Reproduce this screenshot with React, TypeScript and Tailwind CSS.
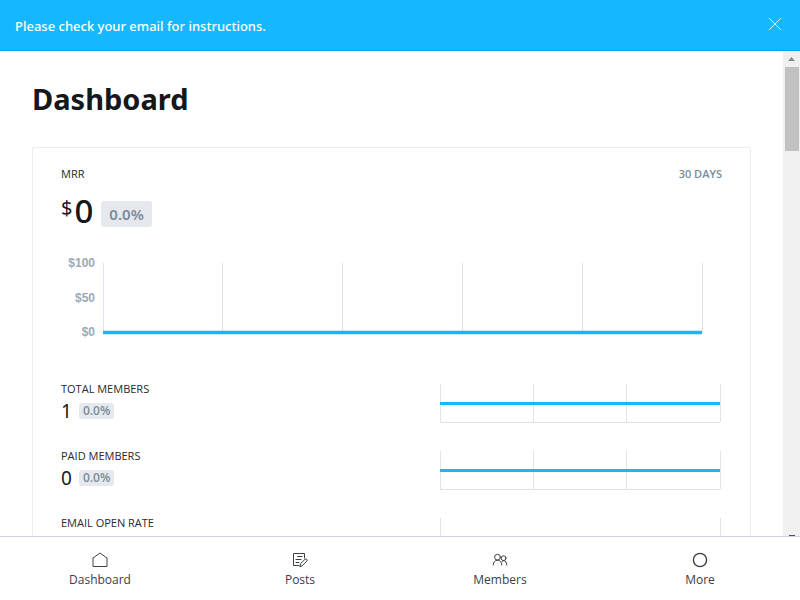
import type { ReactNode } from 'react';

type MetricProps = { label: string; value?: string; change?: string };

function Badge({ children, large = false }: { children: ReactNode; large?: boolean }) {
  return (
    <span
      className={
        large
          ? 'rounded-[3px] bg-[#e5e9ed] px-2 text-[15px] leading-[26px] font-semibold text-[#7c8b9a]'
          : 'rounded-[3px] bg-[#e5e9ed] px-1 text-[12px] leading-4 font-semibold text-[#7c8b9a]'
      }
    >
      {children}
    </span>
  );
}

function MrrChart() {
  const columns = [0, 20, 40, 60, 80, 100];
  return (
    <div className="mt-6 flex pr-5">
      <div className="flex w-[34px] flex-col justify-between text-right font-['Liberation_Sans',Arial,sans-serif] text-[12px] leading-4 font-bold text-[#9baab8]">
        <span>$100</span>
        <span>$50</span>
        <span>$0</span>
      </div>
      <svg className="my-2 ml-2 h-[69px] min-w-0 flex-1 overflow-visible" role="img" aria-label="MRR over the last 30 days">
        {columns.map((x) => (
          <line key={x} x1={`${x}%`} x2={`${x}%`} y1="0" y2="69" stroke="#dfe2e8" shapeRendering="crispEdges" />
        ))}
        <line x1="0" x2="100%" y1="69.5" y2="69.5" stroke="#15b8ff" strokeWidth="3.6" />
      </svg>
    </div>
  );
}

function SmallChart({ label, hasData }: { label: string; hasData: boolean }) {
  const columns = hasData ? [0, 33.33, 66.67, 100] : [0, 100];
  return (
    <svg className="h-[39px] w-[280px] overflow-visible" role="img" aria-label={label}>
      {columns.map((x) => (
        <line key={x} x1={`${x}%`} x2={`${x}%`} y1="0" y2="38" stroke="#e0e4e9" shapeRendering="crispEdges" />
      ))}
      <line x1="0" x2="100%" y1="38.5" y2="38.5" stroke="#dde3e8" />
      <line x1="0" x2="100%" y1="19.5" y2="19.5" stroke="#15b8ff" strokeWidth="3" />
    </svg>
  );
}

function Metric({ label, value, change }: MetricProps) {
  return (
    <section className="flex h-[67px] items-start justify-between">
      <div>
        <h3 className="text-[11px] leading-4 text-[#26292e]">{label}</h3>
        {value !== undefined && (
          <div className="mt-[2px] flex items-center gap-[7px]">
            <span className="font-['Noto_Sans',sans-serif] text-[19px] leading-6 text-[#15171a]">{value}</span>
            <Badge>{change}</Badge>
          </div>
        )}
      </div>
      <div className="mt-[3px] mr-[2px]">
        <SmallChart label={label} hasData={value !== undefined} />
      </div>
    </section>
  );
}

function HomeIcon() {
  return (
    <svg viewBox="0 0 16 16" className="size-4" fill="none" stroke="currentColor" strokeLinejoin="round" aria-hidden="true">
      <path d="M1 6 8 1l7 5v8.500H1Z" />
    </svg>
  );
}

function PostsIcon() {
  return (
    <svg viewBox="0 0 16 16" className="size-4" fill="none" stroke="currentColor" strokeLinejoin="round" strokeLinecap="round" aria-hidden="true">
      <path d="M12.500 6V1.500h-11v12h5.500M5.500 4.500h4.500M4 7.500h5M4 10.500h3" />
      <path d="m8 14.500.700-3 4.300-4.200q1-.8 1.800 0t0 1.800L10.500 13.500Z" />
    </svg>
  );
}

function MembersIcon() {
  return (
    <svg viewBox="0 0 16 16" className="size-4" fill="none" stroke="currentColor" strokeLinecap="round" aria-hidden="true">
      <circle cx="5.500" cy="5.200" r="2.900" />
      <circle cx="11.600" cy="6.200" r="2.400" />
      <path d="M1.200 13c.1-3 1.800-4.800 4.300-4.800S9.700 10 9.800 13M9.800 9.700c.6-.7 1.200-1 2-1 1.800 0 2.900 1.600 3 4.300" />
    </svg>
  );
}

function MoreIcon() {
  return (
    <svg viewBox="0 0 16 16" className="size-4" fill="none" stroke="currentColor" strokeWidth="1.400" aria-hidden="true">
      <circle cx="8" cy="8" r="6.600" />
    </svg>
  );
}

const navLink = 'flex flex-1 flex-col items-center gap-[2px] pt-[15px] text-[12px] leading-5 text-[#394047]';

export default function App() {
  return (
    <div className="flex h-screen flex-col overflow-hidden bg-white font-['Open_Sans','Noto_Sans',sans-serif] text-[#15171a]">
      <header role="alert" className="flex shrink-0 items-center justify-between border-b border-[#08a5ec] bg-[#15b8ff] px-[15px] pt-[14px] pb-3 text-white">
        <p className="font-['Noto_Sans',sans-serif] text-[13px] leading-5 font-medium">Please check your email for instructions.</p>
        <button type="button" aria-label="Close" className="mb-1 flex size-5 items-center justify-center">
          <svg viewBox="0 0 14 14" className="size-[14px]" stroke="currentColor" strokeOpacity="0.800" aria-hidden="true">
            <path d="m1 1 12 12M13 1 1 13" />
          </svg>
        </button>
      </header>

      <div className="flex min-h-0 flex-1">
        <main className="min-w-0 flex-1 overflow-hidden px-8 pt-7">
          <h1 className="font-['Noto_Sans',sans-serif] text-[29px] leading-10 font-bold">Dashboard</h1>
          <div className="mt-7 rounded-[2px] border border-[#e9ecf0] px-7 pt-[18px]">
            <section>
              <div className="flex justify-between text-[11px] leading-4">
                <h2 className="text-[#26292e]">MRR</h2>
                <span className="font-semibold text-[#7c8b9a]">30 DAYS</span>
              </div>
              <div className="mt-[9px] flex h-10 items-center font-['Noto_Sans',sans-serif]">
                <span className="mb-[6px] text-[20px] leading-6">$</span>
                <span className="ml-[2px] text-[33px] leading-10 font-medium">0</span>
                <span className="mt-[6px] ml-2 flex"><Badge large>0.0%</Badge></span>
              </div>
              <MrrChart />
            </section>
            <div className="mt-[41px]">
              <Metric label="TOTAL MEMBERS" value="1" change="0.0%" />
              <Metric label="PAID MEMBERS" value="0" change="0.0%" />
              <Metric label="EMAIL OPEN RATE" />
            </div>
          </div>
        </main>
        <div aria-hidden="true" className="flex w-[17px] shrink-0 flex-col items-center justify-between bg-[#f0f0f0]">
          <div className="flex w-full flex-col items-center px-[2px]">
            <svg viewBox="0 0 7 4" className="my-[6px] h-1 w-[7px]" fill="#8b8b8b">
              <path d="M0 4 3.500 0 7 4Z" />
            </svg>
            <div className="h-[84px] w-[14px] bg-[#c1c1c1]" />
          </div>
          <div className="h-px w-[6px] bg-[#505050]" />
        </div>
      </div>

      <nav aria-label="Main" className="flex h-16 shrink-0 border-t border-[#ced4d9] bg-white">
        <a href="#dashboard" className={navLink}><HomeIcon />Dashboard</a>
        <a href="#posts" className={navLink}><PostsIcon />Posts</a>
        <a href="#members" className={navLink}><MembersIcon />Members</a>
        <button type="button" className={navLink}><MoreIcon />More</button>
      </nav>
    </div>
  );
}
